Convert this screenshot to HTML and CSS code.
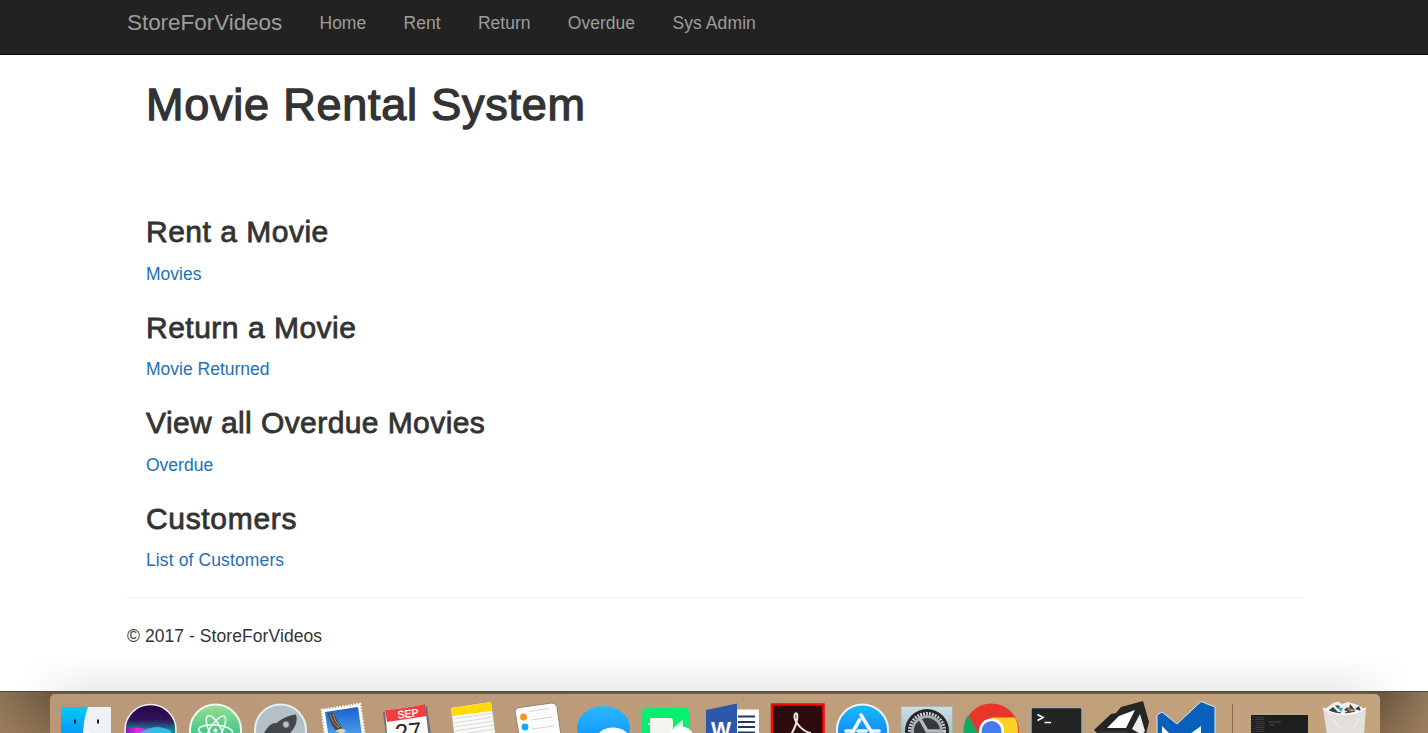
FILE: index.html
```html
<!DOCTYPE html>
<html lang="en">
<head>
<meta charset="utf-8">
<title>Movie Rental System</title>
<link rel="stylesheet" href="styles.css">
</head>
<body>
<div class="screen">
<nav class="navbar">
  <a class="brand">StoreForVideos</a>
  <a class="nav-link">Home</a>
  <a class="nav-link">Rent</a>
  <a class="nav-link">Return</a>
  <a class="nav-link">Overdue</a>
  <a class="nav-link admin">Sys Admin</a>
</nav>
<main class="content">
  <h1>Movie Rental System</h1>
  <section><h3>Rent a Movie</h3><a class="link">Movies</a></section>
  <section><h3>Return a Movie</h3><a class="link">Movie Returned</a></section>
  <section><h3 class="long">View all Overdue Movies</h3><a class="link">Overdue</a></section>
  <section><h3 class="wide">Customers</h3><a class="link customers">List of Customers</a></section>
</main>
<footer class="footer">© 2017 - StoreForVideos</footer>
<div class="shade"></div>
<div class="desktop">
<div class="dock">
<!-- Finder -->
<svg class="icon" viewBox="53 694 65 39"><defs><linearGradient id="fb" x2="0" y2="1"><stop stop-color="#04c8ff"/><stop offset="1" stop-color="#079bf2"/></linearGradient></defs><rect x="61" y="707" width="50" height="30" rx="1" fill="#eef1f5"/><path d="M61 707H88Q84 717 83 733H61Z" fill="url(#fb)"/><path d="M75 719.500v4M98 719.500v4" stroke="#111827" stroke-width="2"/><path d="M83 733h6" stroke="#fff" stroke-width="2"/></svg>
<!-- Siri -->
<svg class="icon" viewBox="118 694 65 39"><defs><linearGradient id="si" x2="0" y2="1"><stop stop-color="#260043"/><stop offset=".3" stop-color="#33135c"/><stop offset=".5" stop-color="#16818e"/></linearGradient><linearGradient id="sm"><stop stop-color="#7a1fb8"/><stop offset=".35" stop-color="#e92be0"/><stop offset="1" stop-color="#e92be0" stop-opacity="0"/></linearGradient></defs><circle cx="150.500" cy="730" r="25.500" fill="url(#si)" stroke="#f5f0f6" stroke-width="1.500"/><path d="M126 728Q143 726 160 733H126Z" fill="url(#sm)"/><path d="M140 733Q155 722 171 731V735H140Z" fill="#37cafa" opacity=".8"/></svg>
<!-- Atom -->
<svg class="icon" viewBox="183 694 65 39"><defs><linearGradient id="at" x2="0" y2="1"><stop stop-color="#99e08b"/><stop offset=".55" stop-color="#45c88a"/></linearGradient></defs><circle cx="215.500" cy="730" r="25.500" fill="url(#at)" stroke="#eefaef" stroke-width="2"/><g fill="none" stroke="#effcf3" stroke-width="1.600"><ellipse cx="215.500" cy="731" rx="17" ry="6" transform="rotate(5 215.500 731)"/><ellipse cx="215.500" cy="731" rx="17" ry="6" transform="rotate(64 215.500 731)"/><ellipse cx="215.500" cy="731" rx="17" ry="6" transform="rotate(121 215.500 731)"/></g><circle cx="215.500" cy="730.500" r="2" fill="#fff"/></svg>
<!-- Launchpad -->
<svg class="icon" viewBox="248 694 65 39"><circle cx="280.500" cy="730" r="25.500" fill="#b3c0c7" stroke="#e8eef0" stroke-width="2"/><path d="M268 733Q278 717 296 714.500Q299 725 288 735H273ZM264 733Q270 722 276 723L270 733Z" fill="#42474b"/><circle cx="286" cy="724.500" r="3" fill="#b9c5ca" stroke="#858e94"/></svg>
<!-- Mail -->
<svg class="icon" viewBox="313 694 65 39"><defs><linearGradient id="ma" x2="0" y2="1"><stop stop-color="#1761cd"/><stop offset="1" stop-color="#55aaf0"/></linearGradient></defs><path d="M322 710L360 704L365 738L326 743Z" fill="#fff" stroke="#fff" stroke-width="2.500" stroke-dasharray="1.700 1.200"/><path d="M325 712L358 707L362 735L329 740Z" fill="url(#ma)"/><path d="M328 714Q332 711 335 715Q337 722 344 730L340 734Q332 729 328 714" fill="#51443a"/><path d="M330 714Q333 724 339 728M333 714Q335 722 340 727" stroke="#a3947c" fill="none" stroke-width="1"/><path d="M335 731Q343 726 346 731L342 734Z" fill="#ddd4b5"/></svg>
<!-- Calendar -->
<svg class="icon" viewBox="378 694 65 39"><path d="M383 712L427 706L431 735H386Z" fill="#65727b"/><path d="M385 710Q407 708 425 704L429 740L388 744Z" fill="#fafafa"/><path d="M385 710Q407 708 425 704L427 716L387 722Z" fill="#ef3e42"/><text x="397.500" y="717.500" class="cal-month" transform="rotate(-7 406 714)">SEP</text><text x="395" y="740" class="cal-day" transform="rotate(-7 408 730)">27</text></svg>
<!-- Notes -->
<svg class="icon" viewBox="443 694 65 39"><path d="M451 708L491 702L496 740H455Z" fill="#fafaf8"/><path d="M451 708L491 702L492 711L452 716Z" fill="#ffda0b"/><path d="M453 719L493 713M454 723L494 717M454 727L494 721M455 731L494 725M455 735L495 729" stroke="#cfcfcf" stroke-width=".8"/></svg>
<!-- Reminders -->
<svg class="icon" viewBox="508 694 65 39"><path d="M515 711Q516 708 519 707.500L552 703Q556 703 557 707L561 735H519Z" fill="#fcfcfc" stroke="#8e8479"/><circle cx="523.500" cy="717" r="3.400" fill="#ff9415"/><circle cx="525" cy="727" r="3.400" fill="#13a9ff"/><path d="M529 711.500L549 708.500M531 720L552 717M532 729L554 726" stroke="#ccc" stroke-width=".8"/></svg>
<!-- Messages -->
<svg class="icon" viewBox="573 694 65 39"><defs><linearGradient id="ms" x2="0" y2="1"><stop stop-color="#28b9ff"/><stop offset=".7" stop-color="#1298fc"/></linearGradient></defs><ellipse cx="603.500" cy="728" rx="26.500" ry="22" fill="url(#ms)"/><ellipse cx="613" cy="740" rx="17" ry="12.500" fill="#fff"/></svg>
<!-- FaceTime -->
<svg class="icon" viewBox="638 694 65 39"><rect x="641.500" y="707.500" width="48.500" height="45" rx="6" fill="#05f071"/><path d="M651 718h19q3 0 3 3v12h-23v-8h-2v-2h2v-3q0-2 1-2Z" fill="#f3f6f1"/><path d="M674 727L683 719.500V733H673Z" fill="#d7fbe4"/><circle cx="681.500" cy="739" r="12.500" fill="#fff"/></svg>
<!-- Word -->
<svg class="icon" viewBox="703 694 65 39"><rect x="735" y="709.500" width="24" height="30" fill="#fff"/><path d="M738 716.500h17M738 722h17M738 727h17M738 732.500h17" stroke="#24385f" stroke-width="2"/><path d="M706 710L737 703.500V733H706Z" fill="#2b58ad"/><text x="711" y="737" class="word" textLength="20" lengthAdjust="spacingAndGlyphs">W</text></svg>
<!-- Acrobat -->
<svg class="icon" viewBox="768 694 65 39"><rect x="772" y="704.500" width="51.500" height="49" fill="#2d0c0d" stroke="#f90505" stroke-width="2.500"/><path d="M789 738C797 726 798 717 797 714Q795 712 794.500 716C794 722 803 732 811 733" fill="none" stroke="#eee8e6" stroke-width="2"/></svg>
<!-- App Store -->
<svg class="icon" viewBox="833 694 65 39"><defs><linearGradient id="as" x2="0" y2="1"><stop stop-color="#13beff"/><stop offset=".6" stop-color="#1887ef"/></linearGradient></defs><circle cx="862.500" cy="730" r="25.500" fill="url(#as)" stroke="#edf6fa" stroke-width="2"/><path d="M861 715L872 733M859.500 720L851 735M846 731H854M858 731H866M871 731H879" fill="none" stroke="#f3faff" stroke-width="3.600" stroke-linecap="round"/></svg>
<!-- System Preferences -->
<svg class="icon" viewBox="898 694 65 39"><defs><linearGradient id="sp" x2="0" y2="1"><stop stop-color="#cbdfe5"/><stop offset="1" stop-color="#9ca6a9"/></linearGradient></defs><rect x="901" y="706.500" width="51.500" height="48" fill="url(#sp)" stroke="#a6b4b8"/><circle cx="927" cy="731" r="22" fill="#252627"/><circle cx="927" cy="731" r="17.500" fill="none" stroke="#d4d7d7" stroke-width="3" stroke-dasharray="1.800 1.200"/><circle cx="927" cy="731" r="14.500" fill="#36393b" stroke="#a7aeb1" stroke-width="3"/><path d="M919 717L927 731H940" fill="none" stroke="#b4babd" stroke-width="3.500"/></svg>
<!-- Chrome -->
<svg class="icon" viewBox="963 694 65 39"><circle cx="991.500" cy="731" r="27.500" fill="#ea352b"/><path d="M968 715L982 739H965Q961 726 968 715" fill="#17a765"/><path d="M991 717.500H1015Q1019 725 1018 736H991Z" fill="#ffd026"/><circle cx="991.500" cy="731" r="12.500" fill="#fff"/><circle cx="991.500" cy="731" r="10" fill="#447cf0"/></svg>
<!-- Terminal -->
<svg class="icon" viewBox="1028 694 65 39"><rect x="1031" y="707.500" width="51" height="46" rx="2" fill="#222426" stroke="#9da9aa" stroke-width="1.500"/><path d="M1037.500 714.500L1043 717.500L1037.500 720.500M1044.500 722.500H1051" fill="none" stroke="#fff" stroke-width="1.700"/></svg>
<!-- Unity -->
<svg class="icon" viewBox="1093 694 65 39"><path d="M1094 730L1111 714L1116 713L1121 707L1143 701L1149 722L1146 734H1098Z" fill="#252525"/><path d="M1107 728L1119 716L1135 710L1126 728Z" fill="#fff"/><path d="M1132 729L1140 714L1145 731L1142 735Z" fill="#eee"/><path d="M1099 731H1127V735H1100Z" fill="#333"/></svg>
<!-- Visual Studio Code -->
<svg class="icon" viewBox="1158 694 65 39"><path d="M1157 715L1162 712L1177 724L1201 701.500L1215 707V735H1157Z" fill="#0860bd" stroke="#dce5ea"/><path d="M1162 726L1170 734H1162ZM1190 734L1201 726V735Z" fill="#fff"/></svg>
<svg class="divider" viewBox="1223 694 20 39"><path d="M1232.500 704V733" stroke="#8b6b4d"/></svg>
<!-- Minimized editor window -->
<svg class="icon" viewBox="1243 694 65 39"><rect x="1251" y="715" width="57" height="30" fill="#1c1e20"/><path d="M1253 716V733" stroke="#345362" stroke-width="1.500" stroke-dasharray="1 2"/><path d="M1260 717v16" stroke="#3b3d40" stroke-width="9" stroke-dasharray="1 1"/><path d="M1268 722h13M1270 725h4" stroke="#596044" stroke-width=".8"/></svg>
<!-- Trash -->
<svg class="trash" viewBox="1308 694 70 39"><path d="M1324 710L1333 703L1338 701.500L1342 704L1348 702L1358 705L1365 709L1357 715H1329Z" fill="#efefed"/><path d="M1328 711l5-4 5 5-4 3zM1335 705l5 1-2 3zM1350 704l5 6-6-1zM1355 709l4-3 2 5z" fill="#3a3a42"/><path d="M1337 707l6 1-2 4z" fill="#25b6b0"/><path d="M1347 707l5 2-3 5z" fill="#d26535"/><path d="M1344 710l3-3 3 6z" fill="#3b4a8e"/><path d="M1333 712l8 1M1345 713l10-2" stroke="#614b48" stroke-width="1.500"/><path d="M1323 708Q1334 715 1345 714Q1358 714 1366 708L1364 735H1327Z" fill="#e5e3e1" opacity=".95"/><path d="M1323 708Q1334 715 1345 714Q1358 714 1366 708" fill="none" stroke="#fff" stroke-width="1.200"/><path d="M1332 718L1340 728M1359 718L1352 730" fill="none" stroke="#f4f3f2"/></svg>
</div>
</div>
</div>
</body>
</html>
```
FILE: styles.css
```css
* { box-sizing: border-box; }
body { margin: 0; overflow: hidden; background: #fff; color: #333; font: 17.5px/25px "Liberation Sans", Arial, sans-serif; }
.screen { display: flex; flex-direction: column; width: 1428px; height: 733px; position: relative; }
.navbar { height: 55px; flex: none; display: flex; align-items: flex-start; padding: 10px 0 0 127px; background: #222; border-bottom: 1px solid #080808; color: #9d9d9d; }
.brand { font-size: 22.5px; width: 192.5px; letter-spacing: -.05px; white-space: nowrap; }
.nav-link { margin-right: 37.4px; white-space: nowrap; padding-top: 1px; }
.admin { letter-spacing: .1px; }
.content { padding: 25px 0 0 146px; height: 542px; flex: none; }
h1, h3 { margin: 0; font-weight: 400; white-space: nowrap; -webkit-text-stroke: .8px #333; }
h1 { font-size: 45px; line-height: 49.5px; height: 135.15px; letter-spacing: .77px; -webkit-text-stroke-width: 1.3px; }
h3 { font-size: 30px; line-height: 33px; margin-bottom: 13.6px; letter-spacing: .5px; }
h3.long { letter-spacing: .42px; }
h3.wide { letter-spacing: .67px; }
section { height: 95.5px; }
.link { display: block; color: #2370b5; }
.customers { letter-spacing: .12px; }
.footer { margin: 0 126px 0 127px; padding-top: 26px; height: 94px; flex: none; border-top: 1px solid #eee; letter-spacing: .07px; }
.shade { position: absolute; left: 20px; right: 20px; top: 655px; height: 36px; background: linear-gradient(transparent, rgba(0,0,0,.07)); -webkit-mask-image: linear-gradient(90deg, transparent, #000 70px, #000 calc(100% - 70px), transparent); mask-image: linear-gradient(90deg, transparent, #000 70px, #000 calc(100% - 70px), transparent); }
.desktop { height: 42px; flex: none; padding: 2px 48px 0 50px; background: linear-gradient(transparent, rgba(176,138,100,.4)), linear-gradient(90deg, #8b7354, #6c583f 50px, #6b5640 60px, #6b5640 1370px, #66523c 1380px, #8f775a); border-top: 1px solid #55483b; }
.dock { height: 39px; padding-left: 3px; display: flex; border-radius: 5px 5px 0 0; background: linear-gradient(90deg, #b89877, #c2a37d); box-shadow: 0 0 2px #806849; overflow: hidden; }
.icon { width: 65px; height: 39px; flex: none; overflow: visible; }
.divider { width: 20px; height: 39px; flex: none; }
.trash { width: 70px; height: 39px; flex: none; }
.cal-month { font: 10.5px "Liberation Sans", sans-serif; fill: #fff; stroke: #fff; stroke-width: .3; }
.cal-day { font: 24px "Liberation Sans", sans-serif; fill: #222; }
.word { font: bold 22px "Liberation Sans", sans-serif; fill: #fff; }
```
